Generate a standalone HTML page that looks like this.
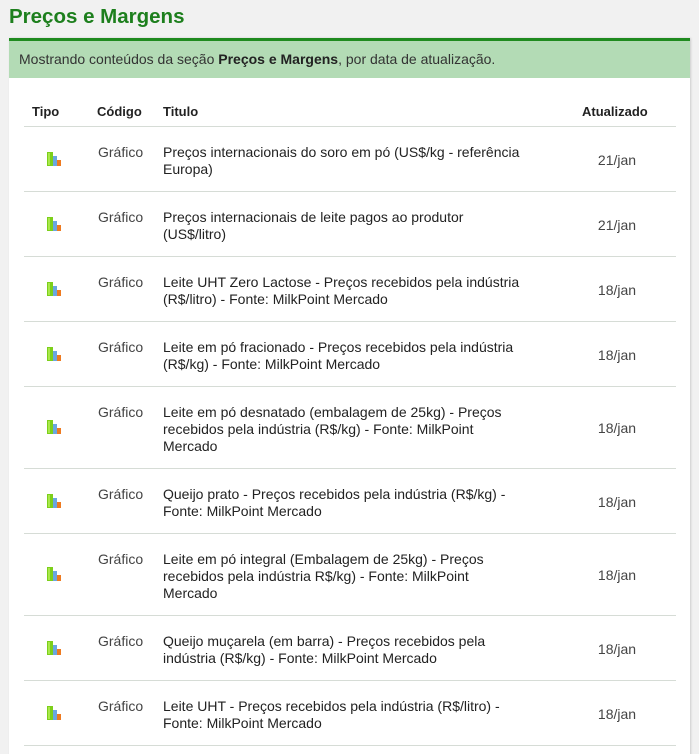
<!DOCTYPE html>
<html><head><meta charset="utf-8"><style>
html,body{margin:0;width:699px;height:754px;overflow:hidden}
body{background:#f1f1f1;font-family:"Liberation Sans",Arial,sans-serif;position:relative}
h1{position:absolute;left:9px;top:5px;margin:0;font-size:20.5px;font-weight:bold;color:#1d7f1d}
.panel{position:absolute;left:9px;top:38px;width:681px;height:716px;background:#fff;border-top:3px solid #1f8a1f;box-shadow:1px 0 2px #ccc}
.band{height:37px;background:#b3dbb5;color:#333;font-size:14px;line-height:37px;padding-left:10px}
.hdr{position:absolute;top:63px;font-size:13px;font-weight:bold;color:#222}
.row{position:absolute;left:24px;width:652px;border-top:1px solid #d6dcd6}
.ic{position:absolute;left:23px;width:16px;height:14px}
.cod{position:absolute;left:74px;top:17px;font-size:14px;color:#444;line-height:17px}
.tit{position:absolute;left:139px;top:17px;font-size:14px;color:#222;line-height:17px}
.dt{position:absolute;left:553px;width:80px;text-align:center;font-size:14px;color:#444;line-height:17px}
</style></head><body>
<h1>Preços e Margens</h1>
<div class="panel">
<div class="band">Mostrando conteúdos da seção <b style="color:#222">Preços e Margens</b>, por data de atualização.</div>
<div class="hdr" style="left:23px">Tipo</div>
<div class="hdr" style="left:88px">Código</div>
<div class="hdr" style="left:154px">Titulo</div>
<div class="hdr" style="left:573px">Atualizado</div>
</div>
<div id="rows"></div>
<script>
var d=[[126,65,"Preços internacionais do soro em pó (US$/kg - referência<br>Europa)","21/jan"],
[191,65,"Preços internacionais de leite pagos ao produtor<br>(US$/litro)","21/jan"],
[256,65,"Leite UHT Zero Lactose - Preços recebidos pela indústria<br>(R$/litro) - Fonte: MilkPoint Mercado","18/jan"],
[321,65,"Leite em pó fracionado - Preços recebidos pela indústria<br>(R$/kg) - Fonte: MilkPoint Mercado","18/jan"],
[386,82,"Leite em pó desnatado (embalagem de 25kg) - Preços<br>recebidos pela indústria (R$/kg) - Fonte: MilkPoint<br>Mercado","18/jan"],
[468,65,"Queijo prato - Preços recebidos pela indústria (R$/kg) -<br>Fonte: MilkPoint Mercado","18/jan"],
[533,82,"Leite em pó integral (Embalagem de 25kg) - Preços<br>recebidos pela indústria R$/kg) - Fonte: MilkPoint<br>Mercado","18/jan"],
[615,65,"Queijo muçarela (em barra) - Preços recebidos pela<br>indústria (R$/kg) - Fonte: MilkPoint Mercado","18/jan"],
[680,65,"Leite UHT - Preços recebidos pela indústria (R$/litro) -<br>Fonte: MilkPoint Mercado","18/jan"],
[745,1,"",""]];
var icon='<svg width="16" height="14" viewBox="0 0 16 14"><rect x="0" y="0" width="6" height="14" fill="#7ccf1a"/><rect x="1" y="1" width="2" height="12" fill="#a8e84a"/><rect x="6" y="4" width="4" height="10" fill="#6aa6e0"/><rect x="10" y="8" width="4" height="6" fill="#ee7a20"/></svg>';
var h='';d.forEach(function(r){h+='<div class="row" style="top:'+r[0]+'px;height:'+r[1]+'px">'+(r[2]?'<div class="ic" style="top:'+(r[1]/2-8)+'px">'+icon+'</div><div class="cod">Gráfico</div><div class="tit">'+r[2]+'</div><div class="dt" style="top:'+(r[1]/2-8)+'px">'+r[3]+'</div>':'')+'</div>';});
document.getElementById('rows').innerHTML=h;
</script>
</body></html>
